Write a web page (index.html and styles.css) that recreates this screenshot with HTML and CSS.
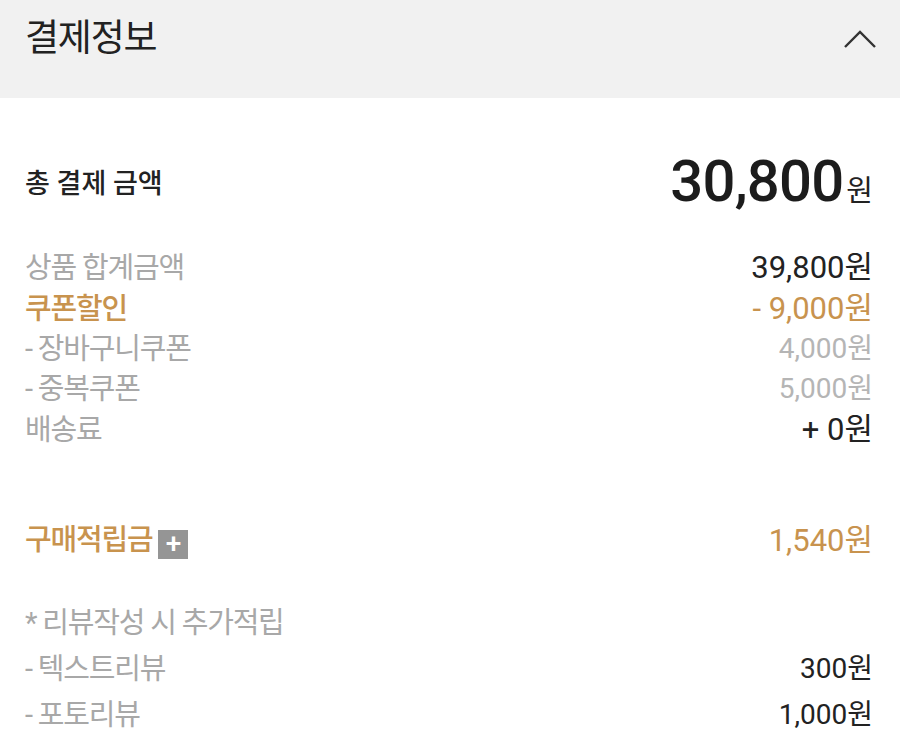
FILE: index.html
```html
<!DOCTYPE html>
<html lang="ko">
<head>
<meta charset="utf-8">
<title>결제정보</title>
<link rel="stylesheet" href="styles.css">
</head>
<body>
<div class="panel">
  <header class="head">
    <h1 class="head-title">결제정보</h1>
    <svg class="chev" width="34" height="20" viewBox="0 0 34 20"><path d="M2 17 L17 2 L32 17" fill="none" stroke="#333" stroke-width="2.4"/></svg>
  </header>
  <section class="body">
    <div class="row total">
      <span class="total-label">총 결제 금액</span>
      <span class="total-val"><span class="big">30,800</span><span class="won">원</span></span>
    </div>
    <div class="list">
      <div class="row line"><span class="lab gray">상품 합계금액</span><span class="val dark">39,800원</span></div>
      <div class="row line"><span class="lab gold strong">쿠폰할인</span><span class="val gold">- 9,000원</span></div>
      <div class="row line sub"><span class="lab gray">- 장바구니쿠폰</span><span class="val light">4,000원</span></div>
      <div class="row line sub"><span class="lab gray">- 중복쿠폰</span><span class="val light">5,000원</span></div>
      <div class="row line"><span class="lab gray">배송료</span><span class="val dark">+ 0원</span></div>
    </div>
    <div class="row line points">
      <span class="lab gold strong">구매적립금 <span class="plus">+</span></span>
      <span class="val gold">1,540원</span>
    </div>
    <div class="list review">
      <div class="row line"><span class="lab gray">* 리뷰작성 시 추가적립</span></div>
      <div class="row line r"><span class="lab gray">- 텍스트리뷰</span><span class="val dark">300원</span></div>
      <div class="row line r"><span class="lab gray">- 포토리뷰</span><span class="val dark">1,000원</span></div>
    </div>
  </section>
</div>
</body>
</html>
```
FILE: styles.css
```css
* { box-sizing: border-box; }
html, body { margin: 0; padding: 0; background: #fff; }
body { font-family: Roboto, "Noto Sans CJK KR", sans-serif; color: #222; }
.panel { width: 900px; }
.head {
  height: 98px;
  background: #f1f1f1;
  display: flex;
  justify-content: space-between;
  align-items: flex-start;
  padding: 0 25px;
}
.head-title {
  margin: 14px 0 0;
  font-size: 37px;
  font-weight: 400;
  letter-spacing: -1.2px;
  color: #222;
  line-height: 50px;
}
.chev { margin-top: 30px; margin-right: -2px; }
.body { padding: 0 27px 0 25px; }
.row { display: flex; justify-content: space-between; align-items: center; }
.total { margin-top: 50px; height: 66px; }
.total-label { font-size: 27px; font-weight: 500; letter-spacing: 0; color: #222; }
.total-val { display: flex; align-items: baseline; }
.big { font-size: 58px; font-weight: 500; letter-spacing: -0.8px; color: #1c1c1c; }
.won { font-size: 29px; margin-left: 3px; color: #222; }
.list { margin-top: 30px; }
.line { height: 41px; font-size: 29px; }
.line.sub { height: 40px; }
.lab { letter-spacing: -1.2px; }
.val { font-size: 31px; letter-spacing: 0; }
.sub .val { font-size: 28px; }
.gray { color: #a8a8a8; }
.dark { color: #222; }
.light { color: #b5b5b5; }
.gold { color: #c8934e; }
.strong { font-weight: 500; }
.points { margin-top: 70px; }
.plus {
  display: inline-flex;
  width: 30px; height: 29px;
  background: #959595; color: #fff;
  align-items: center; justify-content: center;
  font-size: 28px; font-weight: 500;
  vertical-align: -3px;
  margin-left: 0;
  line-height: 1;
  letter-spacing: 0;
}
.review { margin-top: 39px; }
.review .line { height: 46px; }
.review .r .val { font-size: 28px; }
```
